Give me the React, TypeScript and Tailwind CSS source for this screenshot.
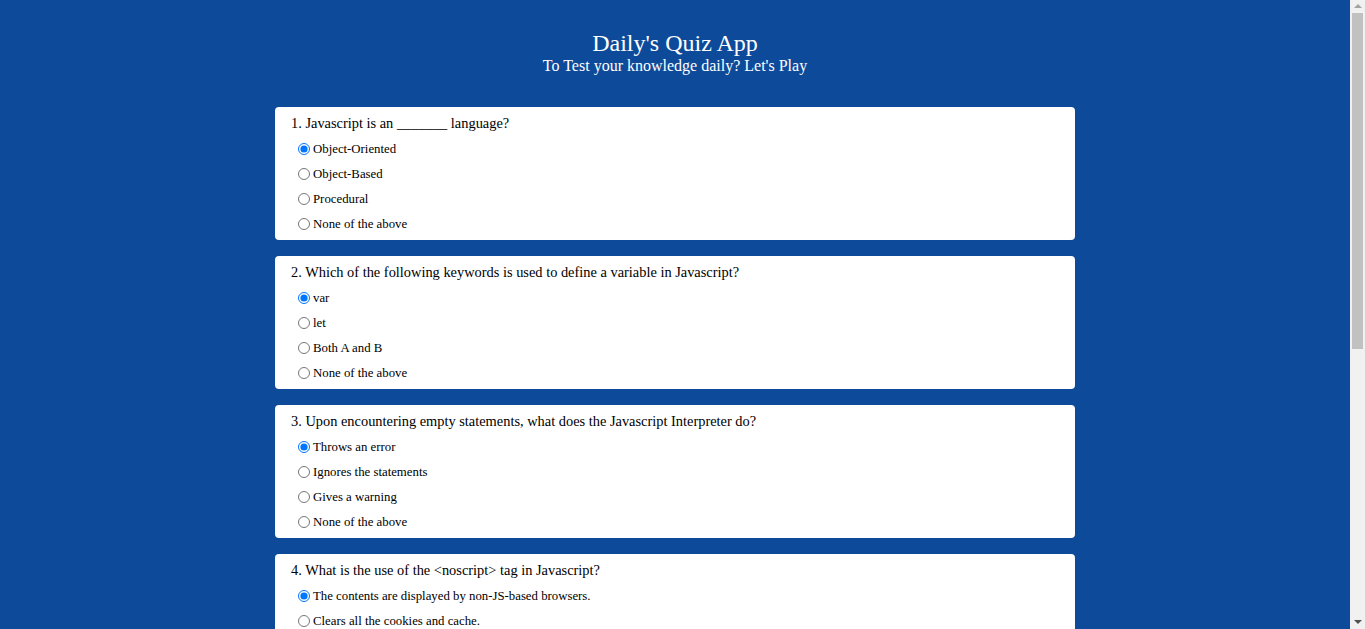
import React, { useState } from "react";

const questions = [
  {
    q: "1. Javascript is an _______ language?",
    options: ["Object-Oriented", "Object-Based", "Procedural", "None of the above"],
  },
  {
    q: "2. Which of the following keywords is used to define a variable in Javascript?",
    options: ["var", "let", "Both A and B", "None of the above"],
  },
  {
    q: "3. Upon encountering empty statements, what does the Javascript Interpreter do?",
    options: ["Throws an error", "Ignores the statements", "Gives a warning", "None of the above"],
  },
  {
    q: "4. What is the use of the <noscript> tag in Javascript?",
    options: [
      "The contents are displayed by non-JS-based browsers.",
      "Clears all the cookies and cache.",
      "Both A and B",
      "None of the above",
    ],
  },
  {
    q: "5. How can a datatype be declared to be a constant type?",
    options: ["const", "var", "let", "constant"],
  },
];

function Question({ idx, q, options }: { idx: number; q: string; options: string[] }) {
  const [sel, setSel] = useState(0);
  return (
    <div className="w-[800px] bg-white rounded-[4px] pl-4 pr-4 py-[4px]">
      <div className="h-[25px] flex items-center text-[14.4px] text-black">{q}</div>
      {options.map((o, i) => (
        <label key={i} className="h-[25px] flex items-center text-[12.8px] text-black">
          <input
            type="radio"
            name={`q${idx}`}
            checked={sel === i}
            onChange={() => setSel(i)}
            className="w-[12px] h-[12px] ml-[7px] mr-[3px] m-0"
          />
          <span className="pt-[2px]">{o}</span>
        </label>
      ))}
    </div>
  );
}

function FakeScrollbar() {
  return (
    <div className="fixed top-0 right-0 h-screen w-[15px] bg-[#f1f1f1] flex flex-col items-center">
      <div className="h-[12px] flex items-center justify-center">
        <div className="w-0 h-0 border-l-[4px] border-r-[4px] border-b-[4px] border-l-transparent border-r-transparent border-b-[#a3a3a3]" />
      </div>
      <div className="w-[11px] h-[336px] bg-[#c1c1c1] mt-[1px]" />
      <div className="flex-1" />
      <div className="h-[14px] flex items-center justify-center">
        <div className="w-0 h-0 border-l-[4px] border-r-[4px] border-t-[4px] border-l-transparent border-r-transparent border-t-[#505050]" />
      </div>
    </div>
  );
}

export default function App() {
  return (
    <div
      className="min-h-screen bg-[#0d4a9a] text-white"
      style={{ fontFamily: '"Liberation Serif", "Times New Roman", serif' }}
    >
      <div className="mr-[15px] pb-[40px]">
        <div className="flex flex-col items-center pt-[29px]">
          <h1 className="text-[24px] leading-[28px]">Daily's Quiz App</h1>
          <h2 className="text-[16px] leading-[18px]">To Test your knowledge daily? Let's Play</h2>
        </div>
        <div className="flex flex-col items-center gap-4 mt-[32px]">
          {questions.map((item, i) => (
            <Question key={i} idx={i} q={item.q} options={item.options} />
          ))}
          <button className="mt-4 bg-white text-[#0d4a9a] text-[16px] px-6 py-2 rounded-[4px]">Submit</button>
        </div>
        <div className="h-[200px]" />
      </div>
      <FakeScrollbar />
    </div>
  );
}
